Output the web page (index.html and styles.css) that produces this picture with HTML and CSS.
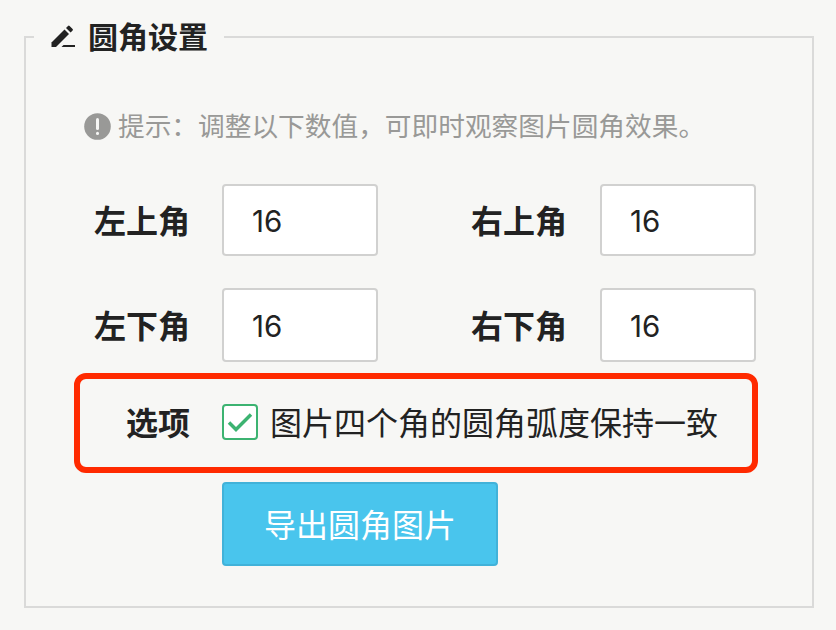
FILE: index.html
```html
<!DOCTYPE html>
<html lang="zh-CN">
  <head>
    <meta charset="UTF-8" />
    <meta name="viewport" content="width=device-width, initial-scale=1.0" />
    <title>圆角设置</title>
    <link rel="stylesheet" href="styles.css" />
  </head>
  <body>
    <form>
      <fieldset class="panel">
        <legend class="panel-title">
          <svg class="icon-edit" width="26" height="24" viewBox="0 0 26 24">
            <path d="M.5 22v-4.500L13.500 4.500l4.500 4.500L5 22z" />
            <path d="M15 3l2-2q.8-.8 1.600 0l3 3q.8.8 0 1.600l-2 2z" />
            <path d="M10.500 22l2-2H24v2z" />
          </svg>
          <span>圆角设置</span>
        </legend>

        <p class="hint">
          <svg class="icon-tip" width="27" height="27" viewBox="0 0 27 27">
            <circle cx="13.500" cy="13.500" r="13.300" />
            <path d="M13.500 6.500v9" />
            <path d="M13.500 20.300v.1" />
          </svg>
          <span>提示：调整以下数值，可即时观察图片圆角效果。</span>
        </p>

        <div class="corners">
          <label for="topLeft">左上角</label>
          <input type="text" id="topLeft" value="16" />
          <label for="topRight">右上角</label>
          <input type="text" id="topRight" value="16" />
          <label for="bottomLeft">左下角</label>
          <input type="text" id="bottomLeft" value="16" />
          <label for="bottomRight">右下角</label>
          <input type="text" id="bottomRight" value="16" />
        </div>

        <div class="option">
          <span class="option-label">选项</span>
          <label class="check">
            <input type="checkbox" class="check-input" checked />
            <svg class="check-box" width="36" height="36" viewBox="0 0 36 36">
              <rect x="1" y="1" width="34" height="34" rx="3" />
              <path d="M7 18.500l7 7L29 10.500" />
            </svg>
            <span class="check-text">图片四个角的圆角弧度保持一致</span>
          </label>
        </div>

        <button type="button" class="button">导出圆角图片</button>
      </fieldset>
    </form>
  </body>
</html>
```

FILE: styles.css
```css
* {
  box-sizing: border-box;
}

body {
  font-family: Inter, "Noto Sans CJK SC", sans-serif;
  background-color: #f7f7f5;
  margin: 0;
  padding: 14px 22px 22px 24px;
  color: #222;
}

.panel {
  height: 594px;
  margin: 0;
  padding: 0 40px 0 8px;
  border: 2px solid #dadad9;
}

.panel-title {
  display: flex;
  align-items: center;
  gap: 11px;
  height: 46px;
  padding: 0 16px 0 17px;
  font-size: 30px;
  font-weight: bold;
  line-height: 46px;
}
.icon-edit {
  fill: #222;
}

.hint {
  display: flex;
  align-items: center;
  gap: 7px;
  height: 40px;
  margin: 46px 0 0 50px;
  color: #999997;
  font-size: 26.700px;
  line-height: 40px;
  white-space: nowrap;
}
.icon-tip {
  flex: none;
  fill: #999997;
}
.icon-tip path {
  stroke: #f7f7f5;
  stroke-width: 3;
  stroke-linecap: round;
}

.corners {
  display: grid;
  grid-template-columns: 96px 156px 158px 156px;
  grid-template-rows: 72px 74px;
  gap: 32px;
  margin: 38px 0 0 60px;
}
.corners label {
  align-self: center;
  padding-bottom: 3px;
  font-size: 32px;
  font-weight: bold;
  white-space: nowrap;
}
/* wider gutter between the left and the right pair */
.corners label:nth-of-type(even) {
  margin-left: 61px;
}
.corners input {
  width: 156px;
  height: 100%;
  padding: 1px 0 0 28px;
  border: 2px solid #d1d1d0;
  border-radius: 4px;
  background: #fff;
  color: #222;
  font-family: inherit;
  font-size: 29.500px;
  outline: none;
}

.option {
  display: flex;
  align-items: center;
  gap: 32px;
  width: 684px;
  height: 100px;
  margin: 11px 0 0 40px;
  padding: 0 0 2px 46px;
  border: 6px solid #ff2a00;
  border-radius: 12px;
  font-size: 32px;
}
.option-label {
  padding-bottom: 3px;
  font-weight: bold;
}
.check {
  display: flex;
  align-items: center;
  gap: 12px;
  white-space: nowrap;
}
.check-input {
  display: none;
}
.check-box {
  fill: #fff;
  stroke: #3cb371;
  stroke-width: 2;
}
.check-box path {
  fill: none;
  stroke-width: 3.500;
}
.check-text {
  padding-bottom: 3px;
}

.button {
  display: block;
  width: 276px;
  height: 84px;
  margin: 9px 0 0 188px;
  padding: 0 0 3px;
  border: 2px solid #41b2d9;
  border-radius: 4px;
  background: #49c5ed;
  color: #fff;
  font-family: inherit;
  font-size: 32px;
  cursor: pointer;
}
```
